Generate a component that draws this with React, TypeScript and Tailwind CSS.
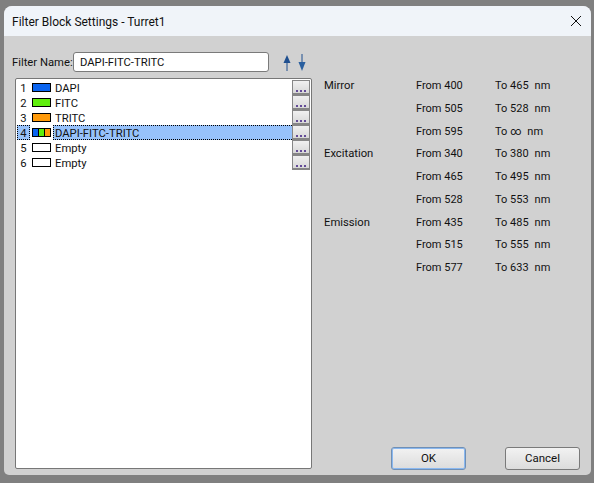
const filters = [
  { id: 1, name: "DAPI", swatch: ["bg-[#0a64f0]"] },
  { id: 2, name: "FITC", swatch: ["bg-[#5fee0c]"] },
  { id: 3, name: "TRITC", swatch: ["bg-[#ff9a0a]"] },
  { id: 4, name: "DAPI-FITC-TRITC", swatch: ["bg-[#0a64f0]", "bg-[#5fee0c]", "bg-[#ff9a0a]"] },
  { id: 5, name: "Empty", swatch: ["bg-white"] },
  { id: 6, name: "Empty", swatch: ["bg-white"] },
];

const ranges = [
  { label: "Mirror", from: "400", to: "465" },
  { label: "", from: "505", to: "528" },
  { label: "", from: "595", to: "∞" },
  { label: "Excitation", from: "340", to: "380" },
  { label: "", from: "465", to: "495" },
  { label: "", from: "528", to: "553" },
  { label: "Emission", from: "435", to: "485" },
  { label: "", from: "515", to: "555" },
  { label: "", from: "577", to: "633" },
];

function FilterRow({ id, name, swatch }: { id: number; name: string; swatch: string[] }) {
  const selected = id === 4;
  return (
    <div className="flex h-[15px] items-center">
      <span className={`flex h-[15px] w-[13px] items-center justify-center pt-[2px] ${selected ? "border border-dotted border-black bg-[#97c2fb]" : ""}`}>
        {id}
      </span>
      <span className="ml-[2px] flex h-[9px] w-[19px] border border-black">
        {swatch.map((c, i) => (
          <span key={i} className={`h-full flex-1 ${c} ${i > 0 ? "border-l border-black" : ""}`} />
        ))}
      </span>
      <span className={`ml-[2px] flex h-[15px] flex-1 items-center pt-[2px] ${selected ? "border-y border-l border-dotted border-black bg-[#97c2fb] pl-[1px]" : "pl-[2px]"}`}>
        {name}
      </span>
      <button className="flex h-[15px] w-[18px] items-end justify-center border border-b-2 border-[#868686] bg-linear-to-b from-[#f0f0f0] to-[#d8d8d8] pb-[1px]">
        <span className="flex gap-[2px]">
          <span className="size-[2px] rounded-full bg-[#3a1a80]" />
          <span className="size-[2px] rounded-full bg-[#3a1a80]" />
          <span className="size-[2px] rounded-full bg-[#3a1a80]" />
        </span>
      </button>
    </div>
  );
}

export default function App() {
  return (
    <div className="h-[483px] w-[594px] bg-[#808080] pt-[6px] pr-[3px] pb-[8px] pl-[4px] font-['Roboto',sans-serif] text-[11.25px] leading-none text-[#111]">
      <div className="flex h-full flex-col overflow-hidden rounded-t-lg rounded-b-[5px] bg-[#d1d1d1]">
        <div className="flex h-[30px] shrink-0 items-center justify-between bg-[#f0f4f9] pr-[9px] pl-[8px] text-[12px]">
          <span className="pt-[1px]">Filter Block Settings - Turret1</span>
          <svg width="12" height="12" viewBox="0 0 12 12" className="stroke-[#111]">
            <path d="M1 1 L11 11 M11 1 L1 11" strokeWidth="1" fill="none" />
          </svg>
        </div>

        <div className="flex flex-1 pt-[16px] pr-[11px] pb-[5px] pl-[11px]">
          <div className="flex w-[297px] flex-col">
            <div className="flex h-[20px] items-center">
              <span className="ml-[-3px] w-[61px] whitespace-nowrap pt-[1px]">Filter Name:</span>
              <div className="flex h-[20px] w-[196px] items-center rounded-[3px] border border-[#7a7a7a] bg-white pt-[2px] pl-[6px]">
                DAPI-FITC-TRITC
              </div>
              <svg width="24" height="18" viewBox="0 0 24 18" className="mt-[1px] ml-[14px]">
                <path d="M4 17 V7" stroke="#1f4f8f" strokeWidth="1" />
                <path d="M4 1 L7.5 9 H0.5 Z" fill="#1f4f8f" />
                <path d="M19 0 V10" stroke="#1f4f8f" strokeWidth="1" />
                <path d="M19 17 L15.5 8 H22.5 Z" fill="#2a5f9f" />
              </svg>
            </div>
            <div className="mt-[6px] mb-[1px] flex-1 rounded-[2px] border border-[#777] bg-white pt-[1px] pr-[1px] pl-[1px]">
              {filters.map((f) => (
                <FilterRow key={f.id} {...f} />
              ))}
            </div>
          </div>

          <div className="flex flex-1 flex-col justify-between pl-[12px]">
            <div className="grid auto-rows-[22.75px] grid-cols-[92px_79px_auto] justify-start pt-[28px]">
              {ranges.map((r, i) => (
                <div key={i} className="contents">
                  <span>{r.label}</span>
                  <span className="text-[11px]">From {r.from}</span>
                  <span className="flex gap-[6px] text-[11px]">
                    <span>To {r.to}</span>
                    <span>nm</span>
                  </span>
                </div>
              ))}
            </div>
            <div className="flex justify-end gap-[39px] text-[11.5px]">
              <button className="h-[23px] w-[75px] rounded-[3px] border border-[#6f8fb5] bg-linear-to-b from-[#f2f2f2] to-[#dcdcdc] shadow-[inset_0_0_0_1px_#8ab8f0]">
                OK
              </button>
              <button className="h-[23px] w-[75px] rounded-[3px] border border-[#7a7a7a] bg-linear-to-b from-[#f2f2f2] to-[#dcdcdc]">
                Cancel
              </button>
            </div>
          </div>
        </div>
      </div>
    </div>
  );
}
